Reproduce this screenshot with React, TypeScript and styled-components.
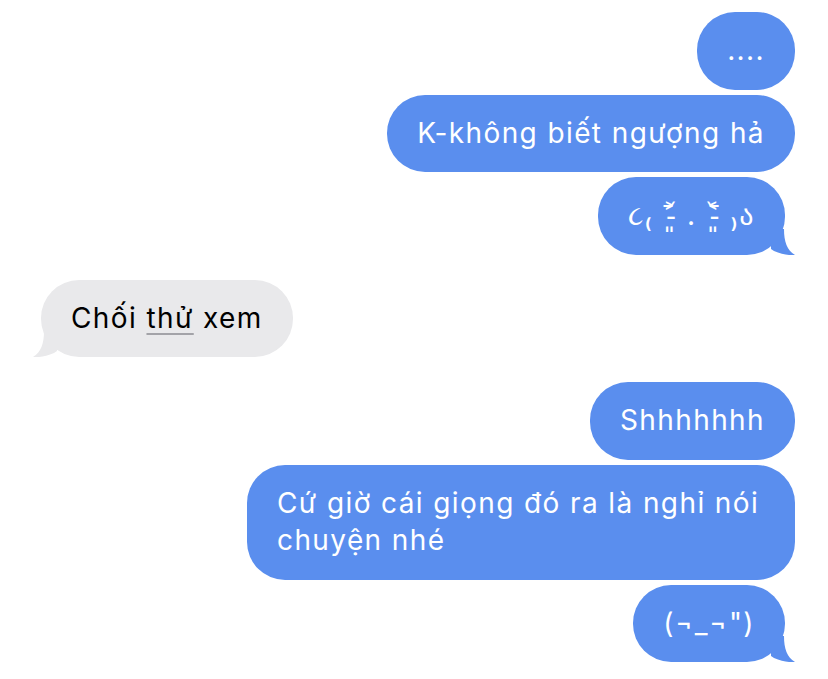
import styled, { createGlobalStyle } from "styled-components"

const BLUE = "#5a8eee"
const GRAY = "#e9e9eb"

type Side = "me" | "them"

interface Message {
  text: React.ReactNode
  tail?: boolean
}

interface Group {
  side: Side
  messages: Message[]
}

const GlobalStyle = createGlobalStyle`
  body {
    margin: 0;
    background: #ffffff;
  }
`

const Thread = styled.div`
  display: flex;
  flex-direction: column;
  gap: 25px;
  padding: 12px 33px;
  font-family: "Inter", "DejaVu Sans", sans-serif;
`

const MessageGroup = styled.div<{ $side: Side }>`
  display: flex;
  flex-direction: column;
  align-items: ${(p) => (p.$side === "me" ? "flex-end" : "flex-start")};
  gap: 5px;
`

const Bubble = styled.div<{ $side: Side; $tail: boolean }>`
  position: relative;
  box-sizing: border-box;
  max-width: 548px;
  padding: 20px 30px;
  border-radius: 38px;
  font-size: 28px;
  line-height: 37.5px;
  letter-spacing: 1.4px;
  background: ${(p) => (p.$side === "me" ? BLUE : GRAY)};
  color: ${(p) => (p.$side === "me" ? "#ffffff" : "#000000")};
  margin-right: ${(p) => (p.$side === "me" && p.$tail ? "10px" : "0")};
  margin-left: ${(p) => (p.$side === "them" && p.$tail ? "8px" : "0")};
`

const TailShape = styled.svg<{ $side: Side }>`
  position: absolute;
  bottom: 0;
  ${(p) =>
    p.$side === "me"
      ? "right: -10px;"
      : "left: -8px; transform: scaleX(-1);"}
`

const LookUp = styled.span`
  text-decoration: underline;
  text-decoration-color: #a3a3a8;
  text-decoration-thickness: 1.5px;
  text-underline-offset: 5px;
`

const Tail = ({ side }: { side: Side }) => (
  <TailShape $side={side} width="24" height="26" viewBox="0 0 24 26">
    <path
      d="M0 0 L13 0 C13 13 16 21 24 26 C19 26.6 11 25.5 3 22 L0 20 Z"
      fill={side === "me" ? BLUE : GRAY}
    />
  </TailShape>
)

const thread: Group[] = [
  {
    side: "me",
    messages: [
      { text: "...." },
      { text: "K-không biết ngượng hả" },
      { text: "૮₍ ˃̵͈᷄ . ˂̵͈᷅ ₎ა", tail: true },
    ],
  },
  {
    side: "them",
    messages: [
      {
        text: (
          <>
            Chối <LookUp>thử</LookUp> xem
          </>
        ),
        tail: true,
      },
    ],
  },
  {
    side: "me",
    messages: [
      { text: "Shhhhhhh" },
      { text: "Cứ giờ cái giọng đó ra là nghỉ nói chuyện nhé" },
      { text: "(¬_¬\")", tail: true },
    ],
  },
]

export default function App() {
  return (
    <>
      <GlobalStyle />
      <Thread>
        {thread.map((group, i) => (
          <MessageGroup key={i} $side={group.side}>
            {group.messages.map((message, j) => (
              <Bubble key={j} $side={group.side} $tail={!!message.tail}>
                {message.text}
                {message.tail && <Tail side={group.side} />}
              </Bubble>
            ))}
          </MessageGroup>
        ))}
      </Thread>
    </>
  )
}
